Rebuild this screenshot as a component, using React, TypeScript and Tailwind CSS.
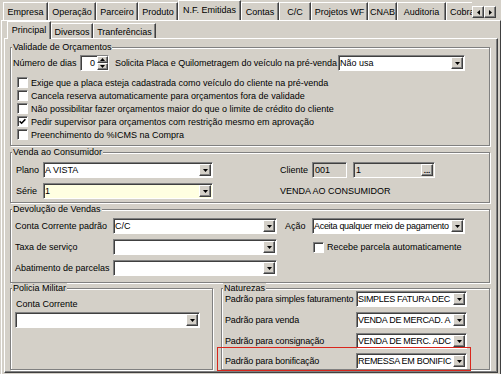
const raised =
  'border border-t-white border-l-white border-r-[#404040] border-b-[#404040] shadow-[inset_-1px_-1px_0_#808080]';
const sunken =
  'border border-t-[#808080] border-l-[#808080] border-r-white border-b-white shadow-[inset_1px_1px_0_#404040]';

type Dir = 'down' | 'up' | 'left' | 'right';

function Arrow({ dir }: { dir: Dir }) {
  if (dir === 'down') {
    return (
      <svg width="5" height="3" viewBox="0 0 5 3">
        <polygon points="0,0 5,0 2.5,3" fill="#000" />
      </svg>
    );
  }
  if (dir === 'up') {
    return (
      <svg width="5" height="3" viewBox="0 0 5 3">
        <polygon points="0,3 5,3 2.5,0" fill="#000" />
      </svg>
    );
  }
  return (
    <svg width="3" height="5" viewBox="0 0 3 5">
      <polygon points={dir === 'left' ? '3,0 3,5 0,2.5' : '0,0 0,5 3,2.5'} fill="#000" />
    </svg>
  );
}

function Combo({
  value = '',
  className = '',
  bg = 'bg-white',
  tight = false,
}: {
  value?: string;
  className?: string;
  bg?: string;
  tight?: boolean;
}) {
  return (
    <div className={`flex h-[16px] shrink-0 items-center ${sunken} ${bg} ${className}`}>
      <span className={`flex-1 overflow-hidden whitespace-nowrap pl-px ${tight ? 'tracking-[-0.3px]' : ''}`}>{value}</span>
      <span className={`mr-px flex h-[12px] w-[12px] shrink-0 items-center justify-center bg-[#d4d0c8] ${raised}`}>
        <Arrow dir="down" />
      </span>
    </div>
  );
}

function Check({ checked = false }: { checked?: boolean }) {
  return (
    <span className={`flex h-[11px] w-[11px] shrink-0 items-center justify-center bg-white ${sunken}`}>
      {checked && (
        <svg width="7" height="7" viewBox="0 0 7 7">
          <path d="M0.6 3.2 L2.6 5.2 L6.4 1.2" stroke="#000" strokeWidth="1.6" fill="none" />
        </svg>
      )}
    </span>
  );
}

function Tab({ label, w, active, big }: { label: string; w: string; active?: boolean; big?: boolean }) {
  if (active) {
    return (
      <div
        className={`relative z-10 -mb-px flex shrink-0 items-center justify-center border-l border-t border-r border-l-white border-t-white border-r-[#404040] bg-[#d4d0c8] pb-[2px] shadow-[inset_-1px_0_0_#808080] ${big ? 'h-[21px]' : 'h-[18px]'} ${w}`}
      >
        {label}
      </div>
    );
  }
  return (
    <div
      className={`flex shrink-0 items-center justify-center border-l border-t border-r border-l-white border-t-white border-r-[#404040] pt-px shadow-[inset_-1px_0_0_#808080] ${big ? 'h-[18px]' : 'h-[15px]'} ${w}`}
    >
      {label}
    </div>
  );
}

function Group({ title, className = '', children }: { title: string; className?: string; children: React.ReactNode }) {
  return (
    <fieldset
      className={`shrink-0 border border-[#808080] pl-[3px] shadow-[inset_1px_1px_0_#fff,1px_1px_0_#fff] ${className}`}
    >
      <legend className="-ml-[2px] bg-[#d4d0c8] px-px leading-[10px]">{title}</legend>
      {children}
    </fieldset>
  );
}

const checks: [string, boolean][] = [
  ['Exige que a placa esteja cadastrada como veículo do cliente na pré-venda', false],
  ['Cancela reserva automaticamente para orçamentos fora de validade', false],
  ['Não possibilitar fazer orçamentos maior do que o limite de crédito do cliente', false],
  ['Pedir supervisor para orçamentos com restrição mesmo em aprovação', true],
  ['Preenchimento do %ICMS na Compra', false],
];

const naturezas = [
  ['Padrão para simples faturamento', 'SIMPLES FATURA DEC'],
  ['Padrão para venda', 'VENDA DE MERCAD. A'],
  ['Padrão para consignação', 'VENDA DE MERC. ADC'],
];

export default function App() {
  return (
    <div className="h-[374px] w-[501px] overflow-hidden bg-[#d4d0c8] font-['Liberation_Sans',Arial,sans-serif] text-[9px] leading-[10px] text-black">
      {/* top tab strip */}
      <div className="flex h-[20px] items-end pl-[3px]">
        <div className="flex w-[469px] items-end overflow-hidden">
          <Tab big label="Empresa" w="w-[45px]" />
          <Tab big label="Operação" w="w-[48px]" />
          <Tab big label="Parceiro" w="w-[42px]" />
          <Tab big label="Produto" w="w-[40px]" />
          <Tab big active label="N.F. Emitidas" w="w-[63px]" />
          <Tab big label="Contas" w="w-[38px]" />
          <Tab big label="C/C" w="w-[32px]" />
          <Tab big label="Projetos WF" w="w-[57px]" />
          <Tab big label="CNAB" w="w-[29px]" />
          <Tab big label="Auditoria" w="w-[49px]" />
          <div className="flex h-[18px] w-[26px] shrink-0 items-center border-l border-t border-l-white border-t-white pl-[3px] pt-px">
            Cobra
          </div>
        </div>
        <div className="mb-[2px] flex">
          <span className={`flex h-[12px] w-[12px] items-center justify-center bg-[#d4d0c8] ${raised}`}>
            <Arrow dir="left" />
          </span>
          <span className={`flex h-[12px] w-[12px] items-center justify-center bg-[#d4d0c8] ${raised}`}>
            <Arrow dir="right" />
          </span>
        </div>
      </div>

      {/* N.F. Emitidas page */}
      <div className="ml-px h-[356px] w-[500px] border-l border-t border-r border-l-white border-t-white border-r-[#404040]">
        <div className="flex h-[17px] items-end pl-[5px]">
          <Tab active label="Principal" w="w-[44px]" />
          <Tab label="Diversos" w="w-[42px]" />
          <Tab label="Tranferências" w="w-[63px]" />
        </div>

        {/* Principal page */}
        <div className={`ml-[2px] flex h-[335px] w-[494px] flex-col pl-[5px] pr-[7px] pt-[3px] ${raised}`}>
          <Group title="Validade de Orçamentos" className="h-[104px]">
            <div className="mt-[3px] flex h-[16px] items-center">
              <span className="-ml-px w-[67px] shrink-0">Número de dias</span>
              <div className={`flex h-[16px] w-[29px] shrink-0 bg-white ${sunken}`}>
                <span className="flex-1 pr-[2px] text-right leading-[14px]">0</span>
                <div className="flex flex-col">
                  <span className={`flex h-[7px] w-[11px] items-center justify-center bg-[#d4d0c8] ${raised}`}>
                    <Arrow dir="up" />
                  </span>
                  <span className={`flex h-[7px] w-[11px] items-center justify-center bg-[#d4d0c8] ${raised}`}>
                    <Arrow dir="down" />
                  </span>
                </div>
              </div>
              <span className="ml-[6px] w-[223px] shrink-0 whitespace-nowrap tracking-[-0.05px]">
                Solicita Placa e Quilometragem do veículo na pré-venda
              </span>
              <Combo value="Não usa" className="w-[127px]" />
            </div>
            <div className="mt-[5px] pl-[3px]">
              {checks.map(([t, c]) => (
                <div key={t} className="flex h-[13px] items-center">
                  <Check checked={c} />
                  <span className="ml-[3px] whitespace-nowrap">{t}</span>
                </div>
              ))}
            </div>
          </Group>

          <Group title="Venda ao Consumidor" className="mt-px h-[56px]">
            <div className="mt-[5px] flex items-center">
              <span className="w-[29px] shrink-0 pl-[2px]">Plano</span>
              <Combo value="A VISTA" className="w-[170px]" />
              <span className="ml-[67px] w-[32px] shrink-0">Cliente</span>
              <div className={`flex h-[16px] w-[35px] shrink-0 items-center bg-[#d4d0c8] pl-[2px] ${sunken}`}>001</div>
              <div className={`ml-[6px] flex h-[16px] w-[82px] shrink-0 items-center bg-[#dcd9d2] ${sunken}`}>
                <span className="flex-1 pl-[2px]">1</span>
                <span
                  className={`mr-px flex h-[12px] w-[12px] items-end justify-center bg-[#d4d0c8] pb-px text-[8px] font-bold leading-[6px] ${raised}`}
                >
                  ...
                </span>
              </div>
            </div>
            <div className="mt-[5px] flex items-center">
              <span className="w-[29px] shrink-0 pl-[2px]">Série</span>
              <Combo value="1" className="w-[170px]" bg="bg-[#ffffe1]" />
              <span className="ml-[67px] whitespace-nowrap">VENDA AO CONSUMIDOR</span>
            </div>
          </Group>

          <Group title="Devolução de Vendas" className="mt-px h-[79px]">
            <div className="mt-[4px] flex items-center">
              <span className="w-[99px] shrink-0 pl-px">Conta Corrente padrão</span>
              <Combo value="C/C" className="w-[164px]" />
              <span className="ml-[8px] w-[27px] shrink-0">Ação</span>
              <Combo tight value="Aceita qualquer meio de pagamento" className="w-[153px]" />
            </div>
            <div className="mt-[5px] flex items-center">
              <span className="w-[99px] shrink-0 pl-px">Taxa de serviço</span>
              <Combo className="w-[164px]" />
              <span className="ml-[36px]">
                <Check />
              </span>
              <span className="ml-[3px] whitespace-nowrap">Recebe parcela automaticamente</span>
            </div>
            <div className="mt-[5px] flex items-center">
              <span className="w-[99px] shrink-0 pl-px">Abatimento de parcelas</span>
              <Combo className="w-[164px]" />
            </div>
          </Group>

          <div className="flex">
            <Group title="Policia Militar" className="h-[87px] w-[203px]">
              <div className="mt-[6px] pl-[2px]">Conta Corrente</div>
              <Combo className="ml-px mt-[3px] w-[185px]" />
            </Group>
            <Group title="Naturezas" className="ml-[8px] h-[87px] w-[269px]">
              <div className="-mt-[2px] flex flex-col gap-[5px]">
                {naturezas.map(([l, v]) => (
                  <div key={l} className="flex items-center">
                    <span className="w-[131px] shrink-0 whitespace-nowrap tracking-[-0.15px]">{l}</span>
                    <Combo tight value={v} className="w-[111px]" />
                  </div>
                ))}
              </div>
              <div className="relative mt-[4px] flex w-[242px] items-center">
                <span className="w-[131px] shrink-0 whitespace-nowrap tracking-[-0.15px]">Padrão para bonificação</span>
                <Combo tight value="REMESSA EM BONIFIC" className="w-[111px]" />
                <span className="pointer-events-none absolute -bottom-[2px] -left-[8px] -right-[4px] -top-[6px] border border-[#d9261c]" />
              </div>
            </Group>
          </div>
        </div>
      </div>
    </div>
  );
}
